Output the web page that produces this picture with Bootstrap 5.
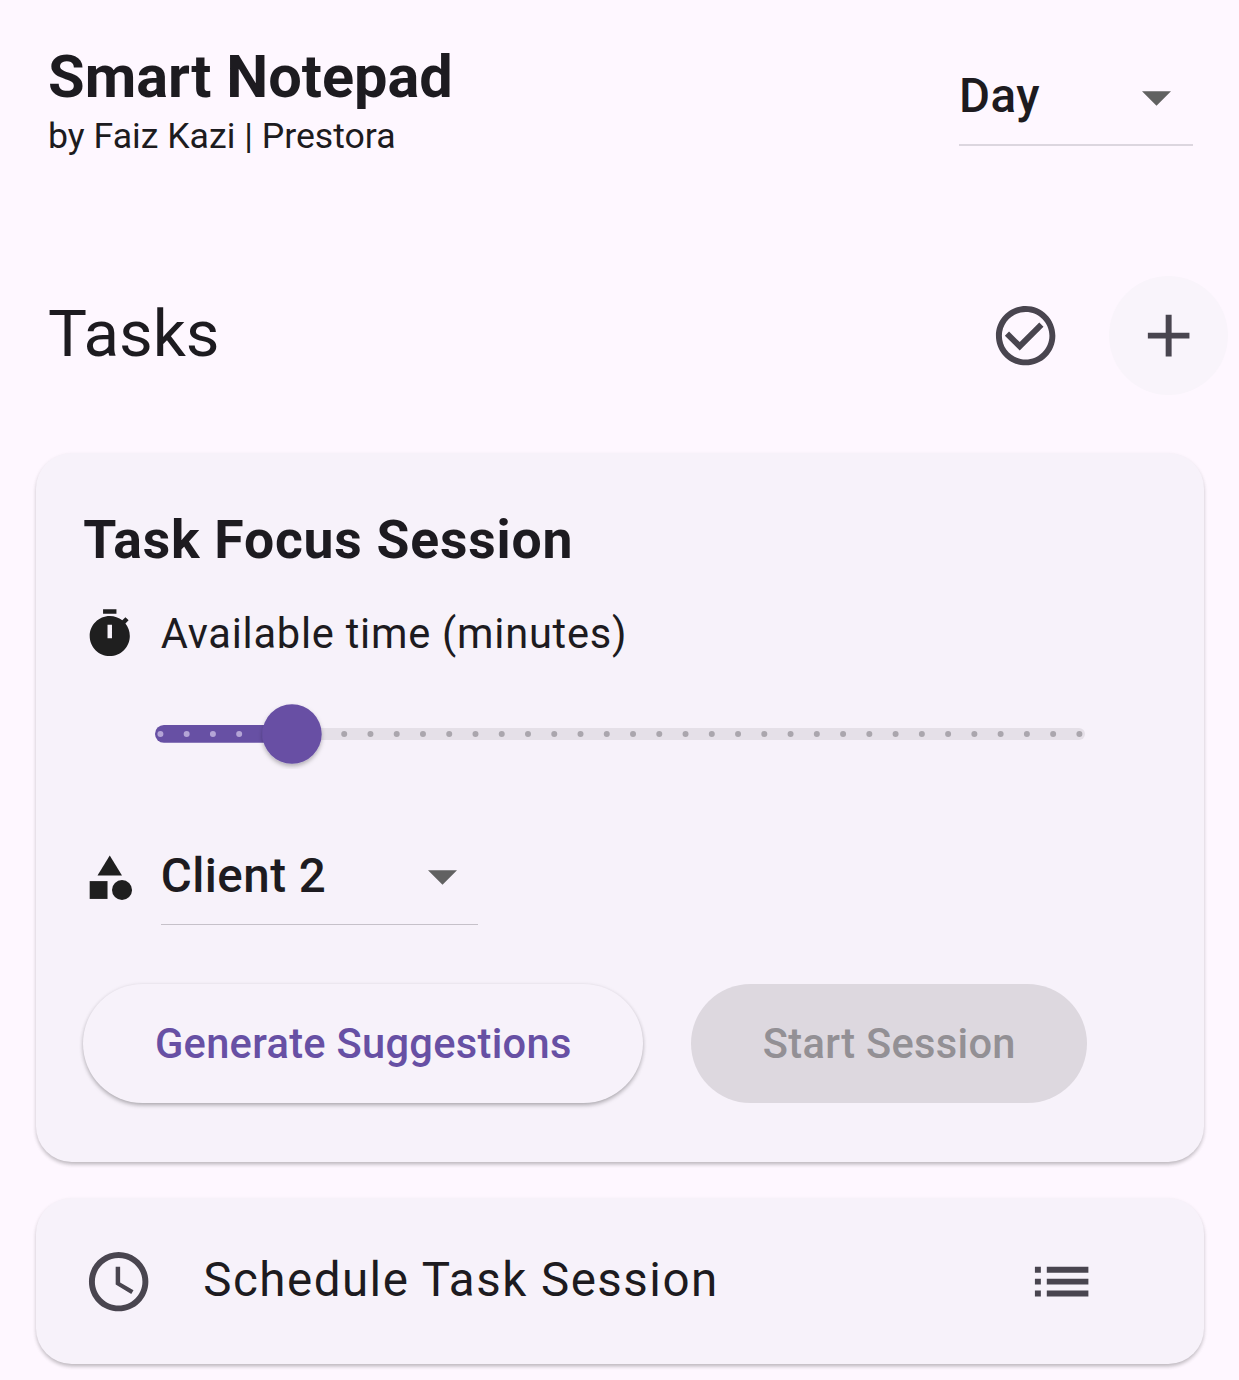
<!DOCTYPE html>
<html lang="en">
<head>
<meta charset="utf-8">
<meta name="viewport" content="width=device-width, initial-scale=1">
<title>Smart Notepad</title>
<link href="https://cdn.jsdelivr.net/npm/bootstrap@5.3.0/dist/css/bootstrap.min.css" rel="stylesheet">
<style>
  body { background: #fef7ff; color: #1d1b20; font-family: Roboto, "Liberation Sans", sans-serif; height: 1380px; overflow: hidden; }
  svg { display: block; flex: none; }
  .app-header { padding: 42px 46px 0 48px; height: 276px; }
  .app-title { font-size: 59.5px; line-height: 71px; font-weight: 700; margin: 0; }
  .app-byline { font-size: 35.65px; line-height: 47px; margin: 0; }
  .picker { font-size: 47.5px; font-weight: 500; letter-spacing: .45px; border-bottom: 2px solid #dcd6df; }
  .picker-day { width: 234px; height: 99px; margin-top: 5px; padding: 1px 22px 0 0; line-height: 94px; }
  .picker-client { width: 317px; height: 98px; padding: 0 21px 0 0; line-height: 94px; border-bottom: 1.5px solid #c6c1c9; }
  .picker-caret { margin-top: 5px; }
  .picker-client .picker-caret { margin-top: 3px; }
  .tasks-bar { height: 119px; padding: 0 11px 0 48px; }
  .tasks-title { font-size: 65.4px; font-weight: 400; line-height: 76px; margin: -4px 0 0; }
  .icon-area { width: 119px; height: 119px; border: 0; background: none; padding: 0; color: #49454f; }
  .icon-hovered { background: #f9f4fb; }
  .panel { background: #f7f2fa; border: 0; border-radius: 35.7px; margin: 0 35px 0 36px; color: #1d1b20;
    box-shadow: 0 3px 4px -1px rgba(0,0,0,.2), 0 2px 4px rgba(0,0,0,.1); }
  .focus-panel { margin-top: 58px; height: 709px; padding: 55px 47px 0 47.3px; }
  .focus-title { font-size: 53.5px; line-height: 64px; font-weight: 700; letter-spacing: .77px; margin: 0; }
  .time-row { height: 63px; margin-top: 30px; gap: 24px; font-size: 41.6px; letter-spacing: .76px; }
  .time-label { margin-top: 1px; }
  .slider { margin: 34px 0 0 66.7px; }
  .client-row { margin-top: 58px; gap: 24px; }
  .shapes-icon { margin-top: 3px; }
  .action-row { margin-top: 59px; gap: 48px; }
  .pill { height: 119px; border: 0; border-radius: 60px; font-size: 41.6px; font-weight: 500; letter-spacing: .3px; padding: 2px 0 0; }
  .pill-generate { width: 560px; color: #6750a4; background: #f7f2fa; box-shadow: 0 3px 5px -1px rgba(0,0,0,.24), 0 1px 4px rgba(0,0,0,.14); }
  .pill-start, .pill-start:disabled { width: 396px; color: #939095; background: #ddd8df; opacity: 1; }
  .schedule-panel { margin-top: 36px; height: 166px; padding: 1px 107px 0 47px; }
  .schedule-title { font-size: 47.5px; letter-spacing: 1.485px; margin: -2px 0 0 49px; }
</style>
</head>
<body>
<header class="app-header d-flex justify-content-between align-items-start">
  <div>
    <h1 class="app-title">Smart Notepad</h1>
    <p class="app-byline">by Faiz Kazi | Prestora</p>
  </div>
  <div class="picker picker-day d-flex justify-content-between align-items-center">
    <span>Day</span>
    <svg class="picker-caret" width="29" height="15" viewBox="0 0 29 15"><path fill="#616161" d="M0 .3h29L14.5 14.8z"/></svg>
  </div>
</header>

<section class="tasks-bar d-flex align-items-center">
  <h2 class="tasks-title me-auto">Tasks</h2>
  <button class="icon-area d-flex align-items-center justify-content-center me-4" type="button" aria-label="Completed tasks">
    <svg width="71.3" height="71.3" viewBox="0 0 24 24" fill="currentColor"><path d="M16.59 7.58 10 14.17l-3.59-3.58L5 12l5 5 8-8zM12 2C6.48 2 2 6.48 2 12s4.48 10 10 10 10-4.48 10-10S17.52 2 12 2zm0 18c-4.42 0-8-3.58-8-8s3.58-8 8-8 8 3.58 8 8-3.58 8-8 8z"/></svg>
  </button>
  <button class="icon-area icon-hovered rounded-circle d-flex align-items-center justify-content-center" type="button" aria-label="Add task">
    <svg width="71.3" height="71.3" viewBox="0 0 24 24" fill="currentColor"><path d="M19 13h-6v6h-2v-6H5v-2h6V5h2v6h6z"/></svg>
  </button>
</section>

<main>
  <section class="panel focus-panel">
    <h3 class="focus-title">Task Focus Session</h3>
    <div class="time-row d-flex align-items-center">
      <svg width="53.5" height="53.5" viewBox="0 0 24 24" fill="#1f1f1f"><path d="M15 1H9v2h6zm4.03 6.39 1.42-1.42c-.43-.51-.9-.99-1.41-1.41l-1.42 1.42C16.07 4.74 14.12 4 12 4c-4.97 0-9 4.03-9 9s4.02 9 9 9 9-4.03 9-9c0-2.12-.74-4.07-1.97-5.61zM13 14h-2V8h2z"/></svg>
      <span class="time-label">Available time (minutes)</span>
    </div>
    <svg class="slider" width="960" height="70" viewBox="150 699 960 70">
      <defs>
        <filter id="knobShadow" x="-20%" y="-20%" width="140%" height="150%"><feDropShadow dx="0" dy="2.5" stdDeviation="2" flood-color="#000" flood-opacity=".28"/></filter>
      </defs>
      <rect x="280" y="728" width="805" height="12" rx="6" fill="#e5e0e8"/>
      <path d="M163.9 725H292v17.8H163.900a8.9 8.9 0 0 1 0-17.8z" fill="#6750a4"/>
      <path d="M160.400 734H250" stroke="#b4a5d6" stroke-width="6" stroke-linecap="round" stroke-dasharray="0 26.257"/>
      <path d="M344.200 734H1080" stroke="#aaa6ad" stroke-width="6" stroke-linecap="round" stroke-dasharray="0 26.257"/>
      <circle cx="292" cy="734" r="29.7" fill="#6750a4" filter="url(#knobShadow)"/>
    </svg>
    <div class="client-row d-flex align-items-center">
      <svg class="shapes-icon" width="53.5" height="53.5" viewBox="0 0 24 24" fill="#1f1f1f"><path d="m12 2-5.5 9h11z"/><circle cx="17.5" cy="17.5" r="4.5"/><path d="M3 13.5h8v8H3z"/></svg>
      <div class="picker picker-client d-flex justify-content-between align-items-center">
        <span>Client 2</span>
        <svg class="picker-caret" width="29" height="15" viewBox="0 0 29 15"><path fill="#616161" d="M0 .3h29L14.5 14.8z"/></svg>
      </div>
    </div>
    <div class="action-row d-flex">
      <button class="btn pill pill-generate" type="button">Generate Suggestions</button>
      <button class="btn pill pill-start" type="button" disabled>Start Session</button>
    </div>
  </section>

  <section class="panel schedule-panel d-flex align-items-center">
    <svg width="71.3" height="71.3" viewBox="0 0 24 24" fill="#49454f"><path d="M12 2C6.48 2 2 6.48 2 12s4.48 10 10 10 10-4.48 10-10S17.52 2 12 2zm0 18c-4.42 0-8-3.58-8-8s3.58-8 8-8 8 3.58 8 8-3.58 8-8 8zm.5-13H11v6l5.25 3.15.75-1.23-4.5-2.67z"/></svg>
    <span class="schedule-title me-auto">Schedule Task Session</span>
    <svg width="71.3" height="71.3" viewBox="0 0 24 24" fill="#49454f"><path d="M3 13h2v-2H3zm0 4h2v-2H3zm0-8h2V7H3zm4 4h14v-2H7zm0 4h14v-2H7zM7 7v2h14V7z"/></svg>
  </section>
</main>
<script src="https://cdn.jsdelivr.net/npm/bootstrap@5.3.0/dist/js/bootstrap.bundle.min.js"></script>
</body>
</html>
